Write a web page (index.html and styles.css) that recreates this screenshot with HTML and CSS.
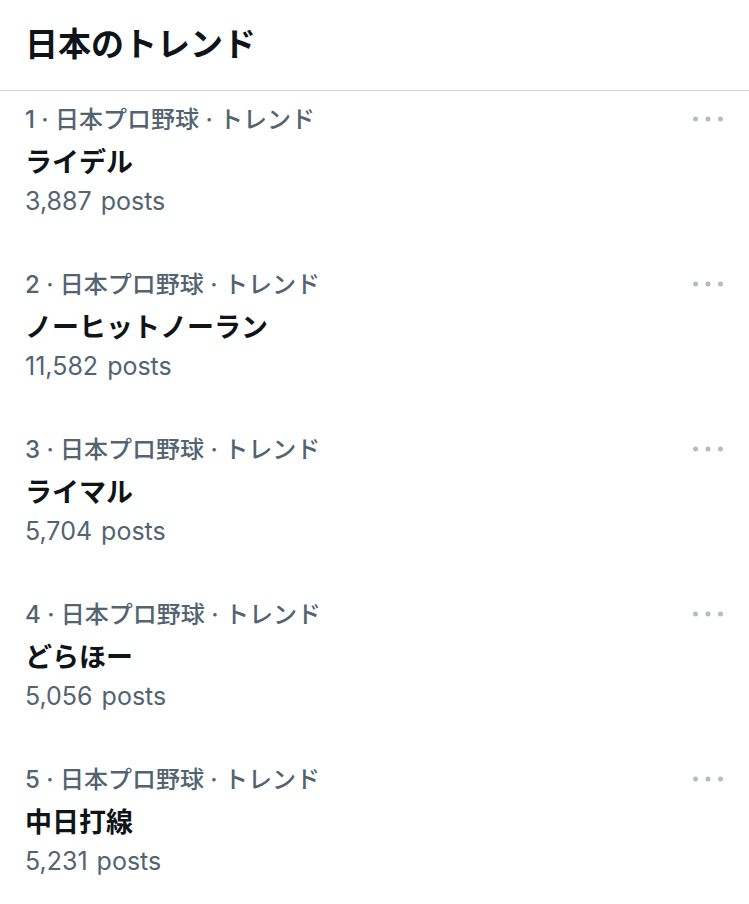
FILE: index.html
```html
<!DOCTYPE html>
<html lang="ja">
<head>
<meta charset="utf-8">
<link rel="stylesheet" href="styles.css">
</head>
<body>
<div class="panel">
  <header class="header"><h1 class="title">日本のトレンド</h1></header>
  <ul class="list">
    <li class="trend">
      <div class="body">
        <div class="meta">1 · 日本プロ野球 · トレンド</div>
        <div class="name">ライデル</div>
        <div class="count">3,887 posts</div>
      </div>
      <svg class="more" width="30" height="6" viewBox="0 0 30 6"><circle cx="2.5" cy="3" r="2.5"/><circle cx="15" cy="3" r="2.5"/><circle cx="27.5" cy="3" r="2.5"/></svg>
    </li>
    <li class="trend">
      <div class="body">
        <div class="meta">2 · 日本プロ野球 · トレンド</div>
        <div class="name">ノーヒットノーラン</div>
        <div class="count">11,582 posts</div>
      </div>
      <svg class="more" width="30" height="6" viewBox="0 0 30 6"><circle cx="2.5" cy="3" r="2.5"/><circle cx="15" cy="3" r="2.5"/><circle cx="27.5" cy="3" r="2.5"/></svg>
    </li>
    <li class="trend">
      <div class="body">
        <div class="meta">3 · 日本プロ野球 · トレンド</div>
        <div class="name">ライマル</div>
        <div class="count">5,704 posts</div>
      </div>
      <svg class="more" width="30" height="6" viewBox="0 0 30 6"><circle cx="2.5" cy="3" r="2.5"/><circle cx="15" cy="3" r="2.5"/><circle cx="27.5" cy="3" r="2.5"/></svg>
    </li>
    <li class="trend">
      <div class="body">
        <div class="meta">4 · 日本プロ野球 · トレンド</div>
        <div class="name">どらほー</div>
        <div class="count">5,056 posts</div>
      </div>
      <svg class="more" width="30" height="6" viewBox="0 0 30 6"><circle cx="2.5" cy="3" r="2.5"/><circle cx="15" cy="3" r="2.5"/><circle cx="27.5" cy="3" r="2.5"/></svg>
    </li>
    <li class="trend">
      <div class="body">
        <div class="meta">5 · 日本プロ野球 · トレンド</div>
        <div class="name">中日打線</div>
        <div class="count">5,231 posts</div>
      </div>
      <svg class="more" width="30" height="6" viewBox="0 0 30 6"><circle cx="2.5" cy="3" r="2.5"/><circle cx="15" cy="3" r="2.5"/><circle cx="27.5" cy="3" r="2.5"/></svg>
    </li>
  </ul>
</div>
</body>
</html>
```
FILE: styles.css
```css
html, body {
  margin: 0;
  padding: 0;
  background: #ffffff;
}
body {
  font-family: "Inter", "Noto Sans CJK JP", sans-serif;
  color: #0f1419;
}
.panel {
  width: 749px;
}
.header {
  padding: 22px 26px 24px 25px;
  border-bottom: 1px solid #cfd9de;
}
.title {
  margin: 0;
  font-size: 33px;
  line-height: 44px;
  font-weight: 700;
}
.list {
  list-style: none;
  margin: 0;
  padding: 0;
}
.trend {
  display: flex;
  justify-content: space-between;
  align-items: flex-start;
  padding: 13px 26px 40px 25px;
}
.body {
  display: flex;
  flex-direction: column;
}
.meta {
  font-size: 24px;
  line-height: 32px;
  font-weight: 500;
  color: #536471;
}
.name {
  margin-top: 9px;
  font-size: 27px;
  line-height: 36px;
  font-weight: 700;
  color: #0f1419;
}
.count {
  margin-top: 5px;
  font-size: 25px;
  line-height: 30px;
  font-weight: 400;
  color: #536471;
  word-spacing: 2px;
}
.more {
  margin-top: 12px;
  fill: #b4bcc3;
}
```
